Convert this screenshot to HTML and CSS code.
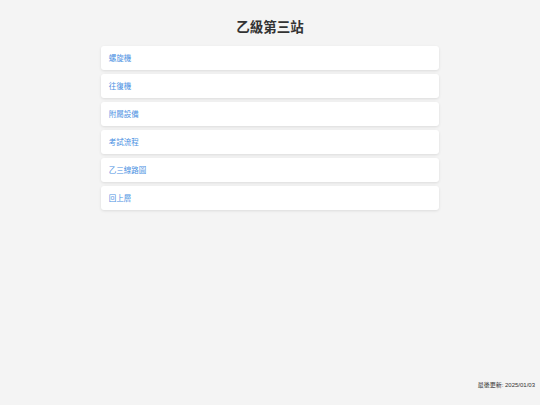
FILE: index.html
```html
<!DOCTYPE html>
<html lang="zh-Hant">
  <head>
    <meta charset="UTF-8" />
    <meta name="viewport" content="width=device-width, initial-scale=1.0" />
    <title>乙級第三站</title>
    <link rel="stylesheet" href="styles.css">
  </head>
  <body>
    <div class="container">
      <h1>乙級第三站</h1>
      <ul class="menu">
        <li><a href="#">螺旋機</a></li>
        <li><a href="#">往復機</a></li>
        <li><a href="#">附屬設備</a></li>
        <li><a href="#">考試流程</a></li>
        <li><a href="#">乙三線路圖</a></li>
        <li><a href="#">回上層</a></li>
      </ul>
    </div>

    <div class="footer">最後更新: 2025/01/03</div>
  </body>
</html>
```

FILE: styles.css
```css
body {
  margin: 0;
  padding: 0;
  font-family: Arial, "Liberation Sans", "Noto Sans CJK TC", sans-serif;
  background-color: #f4f4f4;
  color: #333;
  height: 100vh;
  position: relative;
}

.container {
  max-width: 337.5px;
  margin: 0 auto;
  padding-top: 18px;
}

h1 {
  margin: 0 0 8px;
  font-size: 13.5px;
  line-height: 20px;
  text-align: center;
  color: #333;
}

.menu {
  list-style: none;
  margin: 0;
  padding: 0;
}

.menu li {
  background: #fff;
  margin-bottom: 4px;
  border-radius: 3px;
  box-shadow: 0 1px 3px rgba(0, 0, 0, 0.1);
}

.menu a {
  display: block;
  padding: 6.5px 7.5px;
  font-size: 7.5px;
  line-height: 11px;
  color: #4a90e2;
  text-decoration: none;
}

.menu a:hover {
  background-color: #f0f6fd;
}

/* last updated note */
.footer {
  position: absolute;
  right: 5px;
  bottom: 15px;
  font-size: 6px;
  line-height: 9px;
  color: #333;
}
```
